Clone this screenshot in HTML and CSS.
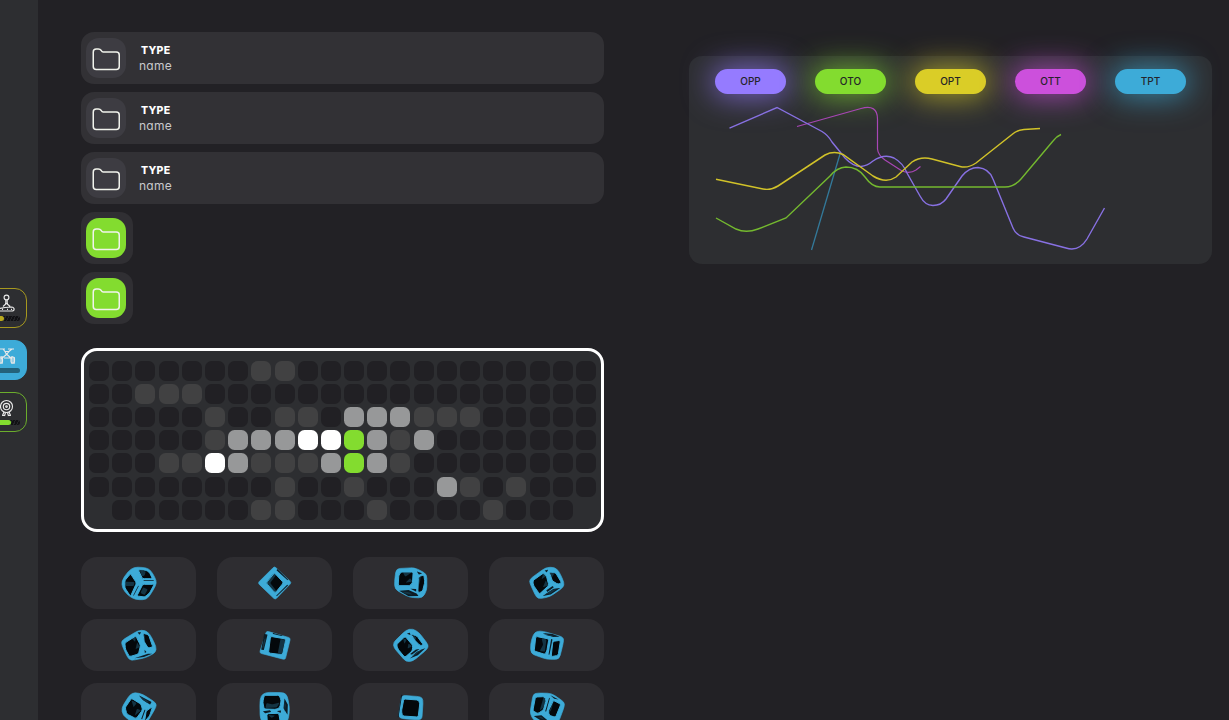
FILE: index.html
```html
<!DOCTYPE html>
<html lang="en">
<head>
<meta charset="utf-8">
<title>Dashboard</title>
<link rel="stylesheet" href="styles.css">
</head>
<body>
<div class="app">
  <aside class="sidebar">
    <div class="tool tool-yellow">
      <svg viewBox="0 0 20 20"><circle cx="9.5" cy="3.5" r="2.4"/><path d="M8.8 6v4L6 12.500M10.200 6v4l3 2.500M8 9.500h3M1 17h13.500c3.500 0 3.500-3.500 0-4l-6.500.5L2 14.500M5 15.300h1M10 15.300h1M14 15.300h1"/></svg>
      <div class="meter"><i class="fill part-low"></i></div>
    </div>
    <div class="tool tool-blue">
      <svg viewBox="0 0 20 20"><path d="M3 3h5M11 3h6M6 3l2 2.500h4L15 3M8 5.500l1.500 3 2.500-3M9.500 8.500L4 13M10 8.500l5 4.500M7 12h6M3 11v7M5 10v8M15 10v8M17 11v7"/><rect x="1.500" y="11" width="4" height="6" rx="1.500"/><rect x="14" y="11" width="3.500" height="6" rx="1.500"/></svg>
      <div class="meter"></div>
    </div>
    <div class="tool tool-green">
      <svg viewBox="0 0 20 20"><circle cx="9.500" cy="8.500" r="6"/><circle cx="9.500" cy="8.500" r="3.200"/><circle cx="9.500" cy="8.500" r=".8"/><path d="M7 14l-1.500 3.500M12 14l1.500 3.500M8.500 14.500L7.500 18M10.500 14.500l1 3.500M5 17.500h3M11 17.500h3"/></svg>
      <div class="meter"><i class="fill part-high"></i></div>
    </div>
  </aside>

  <main class="main">
    <section class="folders">
      <div class="folder"><span class="thumb"><svg viewBox="0 0 28 23"><path d="M1 4q0-3 3-3h2q2 0 3 1.500.7 1.500 2 1.500h13q3 0 3 3v11.500q0 3-3 3H4q-3 0-3-3z"/></svg></span><div class="label"><b>TYPE</b><span>name</span></div></div>
      <div class="folder"><span class="thumb"><svg viewBox="0 0 28 23"><path d="M1 4q0-3 3-3h2q2 0 3 1.500.7 1.500 2 1.500h13q3 0 3 3v11.500q0 3-3 3H4q-3 0-3-3z"/></svg></span><div class="label"><b>TYPE</b><span>name</span></div></div>
      <div class="folder"><span class="thumb"><svg viewBox="0 0 28 23"><path d="M1 4q0-3 3-3h2q2 0 3 1.500.7 1.500 2 1.500h13q3 0 3 3v11.500q0 3-3 3H4q-3 0-3-3z"/></svg></span><div class="label"><b>TYPE</b><span>name</span></div></div>
      <div class="folder compact"><span class="thumb"><svg viewBox="0 0 28 23"><path d="M1 4q0-3 3-3h2q2 0 3 1.500.7 1.500 2 1.500h13q3 0 3 3v11.500q0 3-3 3H4q-3 0-3-3z"/></svg></span></div>
      <div class="folder compact"><span class="thumb"><svg viewBox="0 0 28 23"><path d="M1 4q0-3 3-3h2q2 0 3 1.500.7 1.500 2 1.500h13q3 0 3 3v11.500q0 3-3 3H4q-3 0-3-3z"/></svg></span></div>
    </section>
    <section class="board" id="board"></section>
    <section class="cubes" id="cubes"></section>
  </main>

  <section class="chart">
    <div class="pills">
      <span class="pill purple">OPP</span>
      <span class="pill green">OTO</span>
      <span class="pill yellow">OPT</span>
      <span class="pill magenta">OTT</span>
      <span class="pill blue">TPT</span>
    </div>
    <svg class="lines" viewBox="689 94 523 170">
      <path class="l-blue" d="M811.500 250L840 154"/>
      <path class="l-magenta" d="M797 126.500L861 108.500Q877.500 104 877.500 119V149Q878 155 885 160L902 171Q910 174 916 170L920.500 166.500"/>
      <path class="l-purple" d="M729.500 128.200L777 107.500L822 131.500Q828 135 832 142L845 158Q853 166.500 861 166.500Q867 166 873 161Q884 153.500 894 158Q903 163 907 173L920 196Q925 205.500 933 205.500Q941 205.500 946 199L962 176Q969 167.500 978 167.500Q989 168.500 993 179L1013 228Q1016 235.500 1024 237L1066 248Q1079 252 1087 239L1104.500 208"/>
      <path class="l-green" d="M716 218L736 229Q746 233.500 758 229L786 218L830 176Q837 167.500 846 167Q858 167 865 177Q872 187 880 187H1005Q1014 187 1021 179L1053 141Q1057 136 1061 134.500"/>
      <path class="l-yellow" d="M716 179.300L763 189Q771 190.500 778 186L825 155Q834 150.500 843 154.500L873 176Q886 184 896 177L912 162Q921 156 932 159L960 166.500Q968 168.500 976 163L1012 134.500Q1017 130 1024 129.500L1040 128.500"/>
    </svg>
  </section>
</div>
<script src="app.js"></script>
</body>
</html>
```
FILE: styles.css
```css
* { box-sizing: border-box; }
body {
  margin: 0;
  background: #222125;
  color: #fff;
  font-family: Inter, "Open Sans", sans-serif;
  font-feature-settings: "cv11";
  overflow: hidden;
}
.app { display: flex; height: 720px; overflow: hidden; }
svg { display: block; fill: none; }

.sidebar {
  flex: none;
  width: 38px;
  background: #2d2e31;
  display: flex;
  flex-direction: column;
  align-items: flex-end;
  justify-content: center;
  gap: 12px;
  padding-right: 11.500px;
  overflow: hidden;
}
.tool {
  width: 40px;
  height: 40px;
  flex: none;
  border: 1px solid;
  border-radius: 12px;
  display: flex;
  flex-direction: column;
  align-items: center;
  gap: 2px;
  padding-top: 5px;
}
.tool svg { width: 20px; height: 20px; stroke: #e8e8e8; stroke-width: 1.150; }
.tool-yellow { border-color: #a7991f; }
.tool-blue { border-color: #3dabd8; background: #3dabd8; }
.tool-green { border-color: #6bad2c; }
.meter {
  width: 27px;
  height: 5px;
  flex: none;
  border-radius: 3px;
  background: repeating-linear-gradient(115deg, #111114 0 2px, #242529 2px 3px);
}
.tool-blue .meter { background: #24627a; }
.fill { display: block; height: 5px; border-radius: 3px; }
.part-low { width: 11px; background: #b9a91f; }
.part-high { width: 18px; background: #83dc2f; }

.main {
  flex: none;
  width: 523px;
  margin-left: 43px;
  padding-top: 32px;
}
.folders { display: flex; flex-direction: column; gap: 8px; }
.folder {
  height: 52px;
  border-radius: 13px;
  background: #323135;
  display: flex;
  align-items: center;
  padding-left: 5.400px;
  gap: 12.600px;
}
.compact { width: 52px; background: #302f33; }
.thumb {
  width: 40px;
  height: 40px;
  flex: none;
  border-radius: 13px;
  background: #3d3c42;
  display: flex;
  align-items: center;
  justify-content: center;
}
.thumb svg { width: 28.500px; height: 23px; margin-top: 2px; stroke: #f1f3ec; stroke-width: 1.500; }
.compact .thumb { background: #83dc2f; }
.label { display: flex; flex-direction: column; padding-top: 1px; }
.label b { font-size: 10.500px; line-height: 15px; letter-spacing: .25px; padding-left: 2px; font-weight: 800; }
.label span { font-size: 12px; line-height: 16px; letter-spacing: .3px; color: #c9c9cc; }

.board {
  margin-top: 24px;
  height: 184px;
  border: 3px solid #fff;
  border-radius: 16px;
  background: #2d2e31;
  display: grid;
  grid-template-columns: repeat(22, 20px);
  grid-auto-rows: 20px;
  gap: 3.200px;
  padding: 9.700px 0 0 5px;
}
.cell { border-radius: 6.500px; background: #212024; }
.c1 { background: #414142; }
.c2 { background: #979899; }
.c3 { background: #fff; }
.c4 { background: #83dc2f; }
.none { visibility: hidden; }

.cubes {
  margin-top: 25px;
  display: grid;
  grid-template-columns: repeat(4, 115px);
  grid-template-rows: 52px 52px 52px;
  column-gap: 21px;
  row-gap: 10px;
}
.card {
  background: #2e2d31;
  border-radius: 16px;
  display: flex;
  align-items: center;
  justify-content: center;
}
.card:nth-child(n+9) { margin-top: 2px; height: 52px; }
.card svg { width: 40px; height: 40px; }
.shell { fill: #3dabd8; stroke: #3dabd8; stroke-width: 2; stroke-linejoin: round; }
.pane { fill: #04080b; }
.thin { fill: #0d1c25; }
.glint { fill: #143443; }
.rim { stroke: #3dabd8; stroke-width: 3; stroke-linejoin: round; }

.chart {
  flex: none;
  width: 523px;
  height: 208px;
  margin: 56px 0 0 85px;
  border-radius: 13px;
  background: #2d2e31;
}
.pills { display: flex; gap: 29px; padding: 13px 0 0 26px; }
.pill {
  width: 71px;
  height: 25px;
  border-radius: 13px;
  color: #252429;
  font-size: 10px;
  font-weight: 500;
  line-height: 25px;
  text-align: center;
}
.purple { background: #957bff; box-shadow: 0 0 30px 3px #957bffb3; }
.green { background: #83dc2f; box-shadow: 0 0 30px 3px #83dc2fb3; }
.yellow { background: #dacd27; box-shadow: 0 0 30px 3px #dacd27b3; }
.magenta { background: #cc50dc; box-shadow: 0 0 30px 3px #cc50dcb3; }
.blue { background: #3dabd8; box-shadow: 0 0 30px 3px #3dabd8b3; }
.lines { width: 523px; height: 170px; stroke-width: 1.400; }
.l-purple { stroke: #8871e3; }
.l-yellow { stroke: #d1c229; stroke-width: 1.500; }
.l-green { stroke: #74b92f; }
.l-magenta { stroke: #a846b5; stroke-width: 1.200; }
.l-blue { stroke: #33799a; stroke-width: 1.300; }
```
FILE: app.js
```js
const rows = [
  "0000000110000000000000",
  "0011100000000000000000",
  "0000010011022211100000",
  "0000012223342120000000",
  "0001132111242100000000",
  "0000000010010002101000",
  "-00000011000100001000-"
];
const board = document.getElementById("board");
for (const row of rows) {
  for (const c of row) {
    const cell = document.createElement("div");
    cell.className = "cell " + (c === "-" ? "none" : "c" + c);
    board.appendChild(cell);
  }
}

// Each cube: view origin, outer shell, large panes, thin side panes, reflections.
const cubes = [
  { o: [130.5, 39],
    s: "176,51 212,53 227,62 243,92 241,106 226,132 213,149 180,149 158,137 140,114 139,92 158,64",
    p: ["188,59 209,60 221,66 231,86 201,86", "165,71 183,99 165,139 148,113 148,92", "202,103 236,103 222,129 208,141 184,138"],
    t: ["204,91 235,91 235,93 204,93", "188,107 190,108 175,137 173,137"],
    g: ["193,62 211,64 207,77 199,79", "149,95 177,96 175,108 150,108", "203,112 217,118 207,135 195,129"] },
  { o: [538.5, 39],
    s: "597,49 648,98 599,149 547,99",
    p: ["597,69 624,98 599,129 572,99"],
    t: ["606,57 638,89 636,91 603,61", "638,106 604,139 602,137 635,104"],
    g: ["597,71 602,75 584,99 603,123 599,127 572,99 590,75"] },
  { o: [136.5, 39],
    s: "152,56 206,53 226,62 244,73 244,121 231,144 192,142 148,118 147,94",
    p: ["167,66 203,66 201,98 193,107 158,107 160,75", "219,80 235,75 238,96 231,124 217,128"],
    t: ["160,122 190,120 214,131 219,138 190,139", "194,116 212,117 212,125", "214,64 230,70 220,74"],
    g: ["172,67 200,67 179,80", "194,84 201,95 180,98", "219,82 226,79 222,105", "165,124 190,126 201,134 182,132"] },
  { o: [544.5, 39],
    s: "552,88 600,53 626,51 640,63 656,98 654,112 613,140 585,146 573,143 553,100",
    p: ["562,92 594,69 603,79 610,106 582,132 564,106", "611,66 630,68 648,98 638,103 621,93"],
    t: ["592,138 625,116 644,114 616,133", "602,121 621,108 625,112 606,126", "597,62 608,59 604,67"],
    g: ["594,69 602,79 588,88", "601,91 608,107 592,112", "613,67 628,69 619,83", "599,133 624,118 633,118 613,131"] },
  { o: [130.5, 225],
    s: "138,272 187,242 208,240 223,252 242,290 241,307 211,323 166,332 156,322 139,285",
    p: ["148,279 181,258 195,286 189,312 162,320 150,298", "202,250 219,254 232,291 218,294 206,275"],
    t: ["176,325 218,311 231,311 206,321", "186,247 197,247 192,254", "207,299 213,306 208,309"],
    g: ["168,265 181,260 179,276", "185,277 193,291 180,298", "202,251 208,256 209,279"] },
  { o: [538.5, 225],
    s: "573,243 645,264 629,329 552,309",
    p: ["585,259 631,267 621,314 579,309"],
    t: ["566,252 576,254 565,300 557,299", "592,249 622,257 619,258 592,252"],
    g: ["615,267 629,269 619,312 607,309", "567,265 571,266 564,294 560,293"] },
  { o: [136.5, 225],
    s: "143,278 182,240 201,236 220,247 249,285 246,297 203,333 182,336 145,293",
    p: ["153,284 179,259 202,287 200,303 178,322 158,298", "196,252 214,258 234,285 224,287 209,272"],
    t: ["192,326 225,300 240,294 218,315", "194,312 211,299 222,297 199,314", "184,251 193,248 195,255"],
    g: ["173,267 184,268 177,282", "189,280 200,289 186,296", "199,255 212,262 210,272", "198,320 214,305 230,300"] },
  { o: [544.5, 225],
    s: "574,243 594,244 655,262 653,281 641,328 604,328 556,311 555,282 563,254",
    p: ["571,259 610,267 604,303 598,313 566,303", "622,274 645,271 638,316 617,320"],
    t: ["592,249 622,252 642,260 622,261", "617,267 621,268 612,314 609,314"],
    g: ["588,265 603,268 598,305 583,303 593,284", "594,252 620,256 632,260 608,258"] },
  { o: [130.5, 417],
    s: "138,474 163,434 178,427 202,433 242,459 242,471 211,524 191,532 142,496",
    p: ["168,445 197,463 201,480 182,506 154,492 149,473", "212,483 231,470 223,496 207,516"],
    t: ["190,436 228,456 224,464 202,450", "207,479 210,479 200,508 197,507"],
    g: ["168,451 184,459 174,472", "184,476 197,481 178,497", "191,437 220,455 216,459 199,446"] },
  { o: [538.5, 417],
    s: "556,437 571,427 627,428 636,439 642,473 640,501 629,532 570,532 554,506 553,459",
    p: ["566,436 611,436 617,451 613,472 602,478 566,477 562,457", "574,491 610,490 616,527 576,527"],
    t: ["627,445 637,464 636,494 624,475", "562,484 584,481 587,486 569,490", "604,483 617,481 615,489"],
    g: ["573,459 589,463 613,458 604,472 570,474", "626,453 631,465 628,485", "578,495 599,497 588,504"] },
  { o: [136.5, 417],
    s: "168,436 226,440 233,449 229,510 169,506 159,500",
    p: ["175,447 218,450 223,460 218,501 171,498 168,483"],
    t: ["167,434 170,434 159,501 157,502"],
    g: [] },
  { o: [544.5, 417],
    s: "563,432 577,429 618,430 656,456 657,468 639,517 608,529 567,514 553,491",
    p: ["570,441 596,440 602,450 594,479 577,491 562,482", "624,451 646,463 630,502 611,496 609,482"],
    t: ["614,435 640,449 626,446", "611,443 613,445 602,485 599,484", "565,498 588,496 605,510 590,514"],
    g: ["594,442 601,451 593,474 583,481", "625,453 617,480 612,487 617,464", "576,501 588,500 596,509"] }
];

// Closed path through the points with every corner rounded by up to r units.
function rounded(points, r) {
  const p = points.split(" ").map(s => s.split(",").map(Number));
  const toward = (a, b) => {
    const d = Math.hypot(b[0] - a[0], b[1] - a[1]);
    const t = Math.min(r, d / 2) / d;
    return [(a[0] + (b[0] - a[0]) * t).toFixed(1), (a[1] + (b[1] - a[1]) * t).toFixed(1)];
  };
  return p.map((v, i) => {
    const before = toward(v, p[(i + p.length - 1) % p.length]);
    const after = toward(v, p[(i + 1) % p.length]);
    return `${i ? "L" : "M"}${before}Q${v} ${after}`;
  }).join("") + "Z";
}
const shape = (cls, pts, r) => `<path class="${cls}" d="${rounded(pts, r)}"/>`;
document.getElementById("cubes").innerHTML = cubes.map(c =>
  `<div class="card"><svg viewBox="${c.o[0]} ${c.o[1]} 120 120">` +
  shape("shell", c.s, c.s.split(" ").length === 4 ? 6 : 12) +
  c.p.map(x => shape("pane", x, 5)).join("") +
  c.t.map(x => shape("thin", x, 1)).join("") +
  c.g.map(x => shape("glint", x, 3)).join("") +
  c.p.map(x => shape("rim", x, 5)).join("") +
  `</svg></div>`).join("");
```
